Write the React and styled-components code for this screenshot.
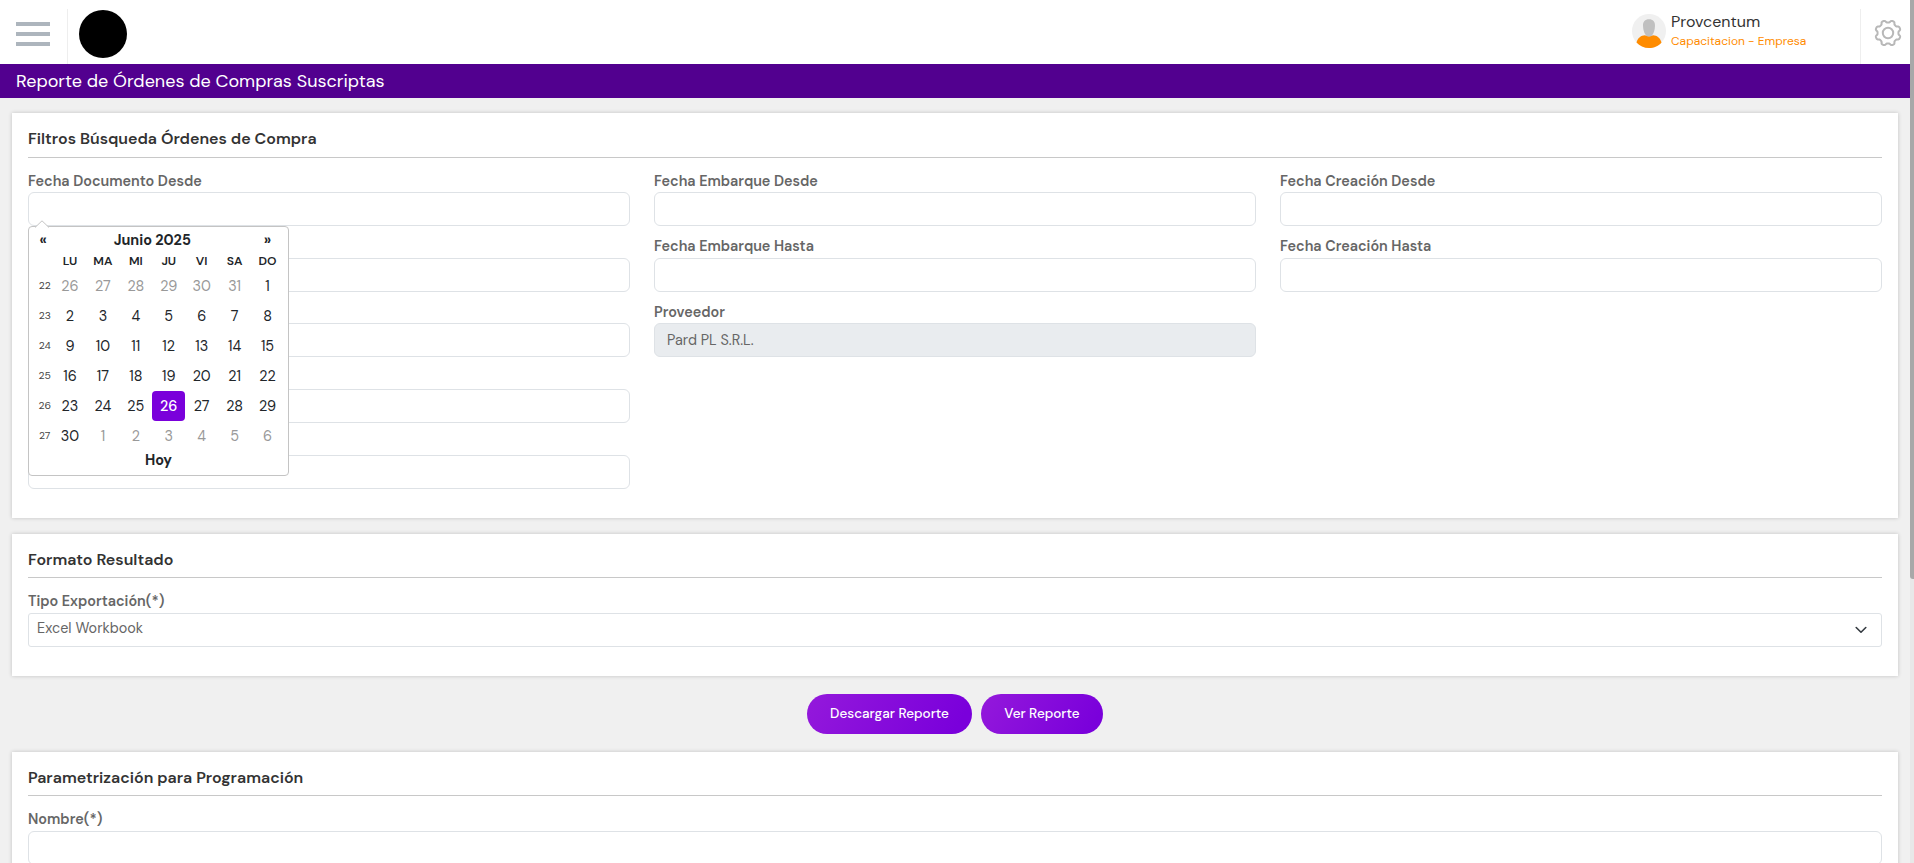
import React from "react";
import styled, { createGlobalStyle } from "styled-components";

const weeks = [
  { number: 22, days: [26, 27, 28, 29, 30, 31, 1] },
  { number: 23, days: [2, 3, 4, 5, 6, 7, 8] },
  { number: 24, days: [9, 10, 11, 12, 13, 14, 15] },
  { number: 25, days: [16, 17, 18, 19, 20, 21, 22] },
  { number: 26, days: [23, 24, 25, 26, 27, 28, 29] },
  { number: 27, days: [30, 1, 2, 3, 4, 5, 6] },
];
const dayNames = ["LU", "MA", "MI", "JU", "VI", "SA", "DO"];

const isOutside = (week, day) =>
  (week === 22 && day > 7) || (week === 27 && day < 7);

// eight rounded teeth around the center of a 28px box
const gearPoints = Array.from({ length: 160 }, (_, i) => {
  const angle = (i / 160) * Math.PI * 2;
  const radius = 11.6 - 1.2 * Math.tanh(2 * Math.cos(angle * 8));
  const x = 14 + radius * Math.cos(angle);
  const y = 14 + radius * Math.sin(angle);
  return `${x.toFixed(2)},${y.toFixed(2)}`;
}).join(" ");

function Calendar() {
  return (
    <Picker>
      <Arrow width="14" height="8" viewBox="0 0 14 8">
        <path d="M0 7.5 7 .8l7 6.7" fill="#fff" stroke="#c4c4c4" />
      </Arrow>
      <PickerHead>
        <span>«</span>
        <span>Junio 2025</span>
        <span>»</span>
      </PickerHead>
      <DayNames>
        <span />
        {dayNames.map((name) => (
          <span key={name}>{name}</span>
        ))}
      </DayNames>
      {weeks.map((week) => (
        <Week key={week.number}>
          <WeekNumber>{week.number}</WeekNumber>
          {week.days.map((day) => (
            <Day
              key={day}
              $muted={isOutside(week.number, day)}
              $active={week.number === 26 && day === 26}
            >
              {day}
            </Day>
          ))}
        </Week>
      ))}
      <Today>Hoy</Today>
    </Picker>
  );
}

function Field({ label, value, disabled, children }) {
  return (
    <FieldGroup>
      <Label>{label}</Label>
      <Input defaultValue={value} disabled={disabled} />
      {children}
    </FieldGroup>
  );
}

export default function App() {
  return (
    <>
      <GlobalStyle />
      <Screen>
        <Page>
          <Header>
            <MenuButton aria-label="Menu">
              <i />
              <i />
              <i />
            </MenuButton>
            <LogoArea>
              <Logo />
            </LogoArea>
            <User>
              <svg width="34" height="34" viewBox="0 0 34 34">
                <circle cx="17" cy="17" r="17" fill="#f0f0f0" />
                <path
                  d="M4.5 28.5C6 23.500 9 21.500 13 21.200q4 2 8 0c4 .3 7 2.300 8.500 7.300C27 32 22 34 17 34S7.500 32 4.500 28.500z"
                  fill="#ff8c00"
                />
                <path
                  d="M17 5.200c4 0 6.200 2.300 6 6.800-.2 4.600-1.500 7.500-2.500 8.500v1q-3.500 1.800-7 0v-1c-1-1-2.300-3.900-2.500-8.500-.2-4.500 2-6.800 6-6.800z"
                  fill="#c0c0c0"
                />
              </svg>
              <div>
                <UserName>Provcentum</UserName>
                <UserRole>Capacitacion - Empresa</UserRole>
              </div>
            </User>
            <Settings>
              <svg
                width="28"
                height="28"
                viewBox="0 0 28 28"
                fill="none"
                stroke="#b8b8b8"
                strokeWidth="2"
                strokeLinejoin="round"
              >
                <polygon points={gearPoints} />
                <circle cx="14" cy="14" r="5.200" />
              </svg>
            </Settings>
          </Header>
          <TitleBar>Reporte de Órdenes de Compras Suscriptas</TitleBar>
          <Main>
            <Card $height={405}>
              <CardTitle $tall>Filtros Búsqueda Órdenes de Compra</CardTitle>
              <Columns>
                <Column>
                  <Field label="Fecha Documento Desde">
                    <Calendar />
                  </Field>
                  <Field />
                  <Field />
                  <Field />
                  <Field />
                </Column>
                <Column>
                  <Field label="Fecha Embarque Desde" />
                  <Field label="Fecha Embarque Hasta" />
                  <Field label="Proveedor" value="Pard PL S.R.L." disabled />
                </Column>
                <Column>
                  <Field label="Fecha Creación Desde" />
                  <Field label="Fecha Creación Hasta" />
                </Column>
              </Columns>
            </Card>
            <Card $height={142}>
              <CardTitle>Formato Resultado</CardTitle>
              <FieldGroup>
                <Label $tall>Tipo Exportación(*)</Label>
                <Select>
                  Excel Workbook
                  <svg width="12" height="8" viewBox="0 0 12 8">
                    <path
                      d="M1.200 1.500 6 6.200l4.800-4.700"
                      fill="none"
                      stroke="#343a40"
                      strokeWidth="1.600"
                      strokeLinecap="round"
                      strokeLinejoin="round"
                    />
                  </svg>
                </Select>
              </FieldGroup>
            </Card>
            <Actions>
              <Button $width={165}>Descargar Reporte</Button>
              <Button $width={122}>Ver Reporte</Button>
            </Actions>
            <Card $height={300}>
              <CardTitle>Parametrización para Programación</CardTitle>
              <FieldGroup>
                <Label $tall>Nombre(*)</Label>
                <Input />
              </FieldGroup>
            </Card>
          </Main>
        </Page>
        <ScrollTrack>
          <ScrollThumb />
        </ScrollTrack>
      </Screen>
    </>
  );
}

const GlobalStyle = createGlobalStyle`
  * {
    box-sizing: border-box;
  }

  body {
    margin: 0;
    overflow: hidden;
    background: #f0f0f0;
    font-family: "DM Sans", Inter, sans-serif;
    font-size: 14.4px;
    color: #212529;
  }
`;

const Screen = styled.div`
  display: flex;
  height: 863px;
  overflow: hidden;
`;

const Page = styled.div`
  flex: 1;
  min-width: 0;
`;

const Header = styled.header`
  display: flex;
  height: 64px;
  background: #fff;
`;

const MenuButton = styled.div`
  display: flex;
  flex-direction: column;
  gap: 6px;
  width: 67px;
  padding: 22px 17px 0 16px;

  i {
    height: 4px;
    background: #adb5bd;
  }
`;

const LogoArea = styled.div`
  flex: 1;
  margin-top: 9px;
  padding: 1px 0 0 11px;
  border-left: 1px solid #eee;
`;

const Logo = styled.div`
  width: 48px;
  height: 48px;
  border-radius: 50%;
  background: #000;
`;

const User = styled.div`
  display: flex;
  gap: 5px;
  width: 228px;
  padding-top: 14px;
`;

const UserName = styled.div`
  margin-top: -2px;
  font-size: 16px;
  line-height: 20px;
  color: #333;
`;

const UserRole = styled.div`
  font-size: 12px;
  line-height: 18px;
  color: #ff8c00;
`;

const Settings = styled.div`
  width: 50px;
  margin-top: 9px;
  padding: 10px 0 0 13px;
  border-left: 1px solid #eee;
`;

const TitleBar = styled.div`
  height: 34px;
  padding-left: 16px;
  background: #52008f;
  font-size: 18px;
  line-height: 34px;
  color: #fff;
`;

const Main = styled.main`
  padding: 15px 12px 0;
`;

const Card = styled.section`
  height: ${({ $height }) => $height}px;
  margin-bottom: 16px;
  padding: 0 16px;
  background: #fff;
  box-shadow: 0 0 4px rgba(0, 0, 0, 0.2);
`;

const CardTitle = styled.h2`
  height: ${({ $tall }) => ($tall ? 45 : 44)}px;
  margin: 0 0 ${({ $tall }) => ($tall ? 12.6 : 13)}px;
  padding-top: 14px;
  border-bottom: 1px solid #c8c8c8;
  font-size: 16px;
  font-weight: 600;
  line-height: 24px;
  color: #333;
`;

const Columns = styled.div`
  display: grid;
  grid-template-columns: repeat(3, 1fr);
  gap: 24px;
`;

const Column = styled.div`
  display: flex;
  flex-direction: column;
  gap: 10px;
`;

const FieldGroup = styled.div`
  position: relative;
`;

const Label = styled.label`
  display: block;
  height: ${({ $tall }) => ($tall ? 22 : 21.6)}px;
  font-size: 14.4px;
  font-weight: 600;
  line-height: 20px;
  color: #666;
`;

const Input = styled.input`
  display: block;
  width: 100%;
  height: 34px;
  padding: 0 12px;
  border: 1px solid #dee2e6;
  border-radius: 6px;
  background: #fff;
  font: inherit;
  color: #666;

  &:disabled {
    background: #e9ecef;
  }
`;

const Select = styled.div`
  display: flex;
  align-items: center;
  justify-content: space-between;
  height: 34px;
  padding: 0 14px 4px 8px;
  border: 1px solid #dee2e6;
  border-radius: 3px;
  color: #666;

  svg {
    margin-top: 3px;
  }
`;

const Actions = styled.div`
  display: flex;
  justify-content: center;
  gap: 9px;
  padding: 2px 0 18px;
`;

const Button = styled.button`
  width: ${({ $width }) => $width}px;
  height: 40px;
  padding: 0 0 2px;
  border: 0;
  border-radius: 20px;
  background: linear-gradient(120deg, #9419db 0%, #7a00db 90%);
  font: inherit;
  font-size: 13.5px;
  font-weight: 500;
  color: #fff;
`;

const Picker = styled.div`
  position: absolute;
  top: 55.4px;
  left: 0;
  z-index: 2;
  width: 261px;
  height: 250px;
  padding: 3px 4px 4px;
  border: 1px solid #c4c4c4;
  border-radius: 4px;
  background: #fff;
  text-align: center;
`;

const Arrow = styled.svg`
  position: absolute;
  top: -7px;
  left: 6px;
`;

const Week = styled.div`
  display: grid;
  grid-template-columns: 20.5px repeat(7, 1fr);
  align-items: center;
  height: 30px;
`;

const PickerHead = styled(Week)`
  grid-template-columns: 20.5px 6fr 1fr;
  height: 19px;
  padding-top: 1px;
  font-weight: 700;
`;

const DayNames = styled(Week)`
  height: 22px;
  padding-top: 2px;
  font-size: 12.2px;
  font-weight: 600;
`;

const WeekNumber = styled.span`
  padding: 0 0 1px 3px;
  font-size: 10.4px;
  color: #444;
`;

const Day = styled.span`
  height: 30px;
  border-radius: 4px;
  background: ${({ $active }) => ($active ? "#7a00db" : "none")};
  font-weight: ${({ $active }) => ($active ? 500 : 400)};
  line-height: 30px;
  color: ${({ $active, $muted }) =>
    $active ? "#fff" : $muted ? "#999" : "#212529"};
`;

const Today = styled.div`
  font-weight: 700;
  line-height: 18px;
`;

const ScrollTrack = styled.div`
  width: 4px;
  background: #e8e8e8;
`;

const ScrollThumb = styled.div`
  height: 579px;
  border-radius: 0 0 0 3px;
  background: #a8a8a8;
`;
